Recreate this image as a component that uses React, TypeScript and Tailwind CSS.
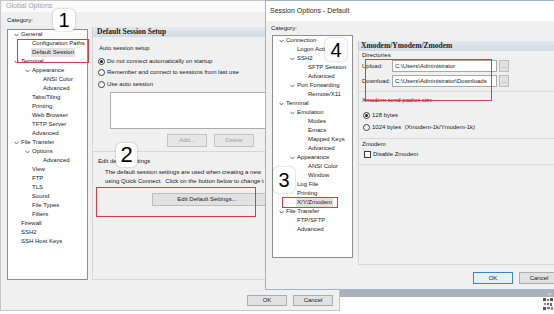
import React from 'react';

type Item = [number, string, boolean?, boolean?];

const TEXT_PL = ['pl-[13px]', 'pl-[24px]', 'pl-[35px]'];
const CHEV_PL = ['pl-[6px]', 'pl-[17px]', 'pl-[28px]'];

const treeA: Item[] = [
  [0, 'General', true],
  [1, 'Configuration Paths'],
  [1, 'Default Session', false, true],
  [0, 'Terminal', true],
  [1, 'Appearance', true],
  [2, 'ANSI Color'],
  [2, 'Advanced'],
  [1, 'Tabs/Tiling'],
  [1, 'Printing'],
  [1, 'Web Browser'],
  [1, 'TFTP Server'],
  [1, 'Advanced'],
  [0, 'File Transfer', true],
  [1, 'Options', true],
  [2, 'Advanced'],
  [1, 'View'],
  [1, 'FTP'],
  [1, 'TLS'],
  [1, 'Sound'],
  [1, 'File Types'],
  [1, 'Filters'],
  [0, 'Firewall'],
  [0, 'SSH2'],
  [0, 'SSH Host Keys'],
];

const treeB: Item[] = [
  [0, 'Connection', true],
  [1, 'Logon Actions'],
  [1, 'SSH2', true],
  [2, 'SFTP Session'],
  [2, 'Advanced'],
  [1, 'Port Forwarding', true],
  [2, 'Remote/X11'],
  [0, 'Terminal', true],
  [1, 'Emulation', true],
  [2, 'Modes'],
  [2, 'Emacs'],
  [2, 'Mapped Keys'],
  [2, 'Advanced'],
  [1, 'Appearance', true],
  [2, 'ANSI Color'],
  [2, 'Window'],
  [1, 'Log File'],
  [1, 'Printing'],
  [1, 'X/Y/Zmodem', false, true],
  [0, 'File Transfer', true],
  [1, 'FTP/SFTP'],
  [1, 'Advanced'],
];

const Chev = () => (
  <svg width="5" height="4" viewBox="0 0 5 4" className="shrink-0">
    <polyline points="0.5,0.8 2.5,3 4.5,0.8" fill="none" stroke="#5a5a5a" strokeWidth="0.9" />
  </svg>
);

function Tree({ items }: { items: Item[] }) {
  return (
    <div className="flex flex-col">
      {items.map(([lvl, label, chev, sel], i) => (
        <div
          key={i}
          className={`h-[9px] flex items-center whitespace-nowrap ${chev ? CHEV_PL[lvl] : TEXT_PL[lvl]}`}
        >
          {chev && <Chev />}
          <span
            className={`leading-[9px] ${chev ? 'ml-[2px]' : ''} ${sel ? 'bg-[#e2e2e2] px-[1px] -ml-[1px]' : ''}`}
          >
            {label}
          </span>
        </div>
      ))}
    </div>
  );
}

const Radio = ({ on }: { on?: boolean }) => (
  <span className="w-[7px] h-[7px] rounded-full border border-[#3a3a3a] bg-white flex items-center justify-center shrink-0">
    {on && <span className="w-[3px] h-[3px] rounded-full bg-[#1a1a1a]" />}
  </span>
);

const Btn = ({ children, cls }: { children: React.ReactNode; cls: string }) => (
  <div className={`flex items-center justify-center border bg-[#e1e1e1] ${cls}`}>{children}</div>
);

export default function App() {
  return (
    <div className="relative w-[554px] h-[314px] overflow-hidden bg-white text-[6px] text-[#1a1a1a] font-['Liberation_Sans',Arial,sans-serif]">
      {/* Window A: Global Options */}
      <div className="absolute left-0 top-0 w-[340px] h-[311px] bg-[#f0f0f0] border border-[#c6c6c6] flex flex-col">
        <div className="h-[11px] bg-[#fafafa] text-[7px] leading-[10px] pl-[5px] text-[#a3a3a3]">Global Options</div>
        <div className="flex h-[268px]">
          <div className="w-[87px] pl-[6px] flex flex-col">
            <div className="mt-[4px] h-[9px] leading-[9px]">Category:</div>
            <div className="mt-[4px] w-[81px] h-[253px] bg-white border border-[#8e8e8e]">
              <Tree items={treeA} />
            </div>
          </div>
          <div className="ml-[4px] mt-[15px] w-[241px] flex flex-col">
            <div className="h-[10px] bg-gradient-to-b from-[#e2e8ef] to-[#d2dbe6] border-l border-[#c5cfda] pl-[4px] font-['Liberation_Serif',serif] font-bold text-[7.5px] leading-[10px] text-[#1a1a1a] whitespace-nowrap">
              Default Session Setup
            </div>
            <div className="h-[243px] border-l border-r border-b border-[#d6d6d6] flex flex-col">
              <div className="mt-[7px] pl-[6px] h-[9px] leading-[9px]">Auto session setup</div>
              <div className="mt-[2.5px] flex flex-col">
                <div className="h-[11.5px] pl-[5px] flex items-center gap-[2px] whitespace-nowrap">
                  <Radio on />
                  <span>Do not connect automatically on startup</span>
                </div>
                <div className="h-[11.5px] pl-[5px] flex items-center gap-[2px] whitespace-nowrap">
                  <Radio />
                  <span>Remember and connect to sessions from last use</span>
                </div>
                <div className="h-[11.5px] pl-[5px] flex items-center gap-[2px] whitespace-nowrap">
                  <Radio />
                  <span>Use auto session</span>
                </div>
              </div>
              <div className="mt-[2px] ml-[17px] w-[200px] h-[37px] bg-white border border-[#adadad]" />
              <div className="mt-[5px] ml-[74px] flex gap-[7px]">
                <Btn cls="w-[40px] h-[13px] border-[#c4c4c4] bg-[#e6e6e6] text-[#a3a3a3]">Add...</Btn>
                <Btn cls="w-[40px] h-[13px] border-[#c4c4c4] bg-[#e6e6e6] text-[#a3a3a3]">Delete</Btn>
              </div>
              <div className="mt-[4px] border-t border-[#d6d6d6]" />
              <div className="mt-[4.5px] pl-[5px] h-[9px] leading-[9px]">Edit default settings</div>
              <div className="mt-[2px] pl-[12px] flex flex-col whitespace-nowrap">
                <div className="h-[9px] leading-[9px]">The default session settings are used when creating a new</div>
                <div className="h-[9px] leading-[9px]">using Quick Connect.&nbsp; Click on the button below to change t</div>
              </div>
              <Btn cls="mt-[7.5px] ml-[59px] w-[140px] h-[13px] border-[#bcbcbc] pr-[30px]">Edit Default Settings...</Btn>
            </div>
          </div>
        </div>
        <div className="mt-[15px] flex justify-end gap-[6px] pr-[6px]">
          <Btn cls="w-[40px] h-[11px] border-[#adadad]">OK</Btn>
          <Btn cls="w-[40px] h-[11px] border-[#adadad]">Cancel</Btn>
        </div>
      </div>

      {/* desktop strip */}
      <div className="absolute left-[340px] top-[290px] w-[214px] h-[7px] bg-[#a9b1ba] flex justify-end items-center pr-[3px]">
        <span className="text-[6px] leading-none text-[#e8e8e8]">×</span>
      </div>
      <svg className="absolute left-[543px] top-[298px]" width="10" height="12" viewBox="0 0 10 12">
        <rect width="10" height="12" fill="#f4f4f4" />
        <rect x="0" y="0" width="3" height="3" fill="#555" />
        <rect x="7" y="0" width="3" height="3" fill="#555" />
        <rect x="0" y="9" width="3" height="3" fill="#555" />
        <rect x="4" y="1" width="2" height="2" fill="#777" />
        <rect x="4" y="5" width="2" height="2" fill="#666" />
        <rect x="1" y="5" width="2" height="2" fill="#888" />
        <rect x="7" y="5" width="2" height="3" fill="#666" />
        <rect x="4" y="9" width="3" height="2" fill="#777" />
        <rect x="8" y="9" width="2" height="3" fill="#888" />
      </svg>

      {/* Window B: Session Options */}
      <div className="absolute left-[265px] top-0 w-[300px] h-[290px] bg-[#f0f0f0] border-l border-t border-b border-[#9fb3c9] flex flex-col">
        <div className="h-[20px] bg-white text-[7px] leading-[20px] pl-[4px] text-[#2a2a2a] whitespace-nowrap">
          Session Options - Default
        </div>
        <div className="flex h-[244px]">
          <div className="w-[87px] flex flex-col">
            <div className="mt-[3px] pl-[5px] h-[9px] leading-[9px]">Category:</div>
            <div className="mt-[2px] ml-[6px] w-[81px] h-[223px] bg-white border border-[#8e8e8e]">
              <Tree items={treeB} />
            </div>
          </div>
          <div className="ml-[5px] mt-[20px] w-[200px] flex flex-col">
            <div className="h-[10px] bg-gradient-to-b from-[#e2e8ef] to-[#d2dbe6] border-l border-[#c5cfda] pl-[2px] font-['Liberation_Serif',serif] font-bold text-[7.5px] leading-[10px] whitespace-nowrap">
              Xmodem/Ymodem/Zmodem
            </div>
            <div className="h-[214px] border-l border-b border-[#d6d6d6] flex flex-col">
              <div className="pl-[3px] h-[9px] leading-[9px]">Directories</div>
              <div className="h-[12px] pl-[3px] flex items-center whitespace-nowrap">
                <span className="w-[30px]">Upload:</span>
                <div className="w-[105px] h-[12px] bg-white border border-[#a8a8a8] pl-[2px] flex items-center">C:\Users\Administrator</div>
                <Btn cls="ml-[2px] w-[10px] h-[12px] border-[#bdbdbd] text-[#777]">...</Btn>
              </div>
              <div className="mt-[3px] h-[12px] pl-[3px] flex items-center whitespace-nowrap">
                <span className="w-[30px]">Download:</span>
                <div className="w-[105px] h-[12px] bg-white border border-[#a8a8a8] pl-[2px] flex items-center overflow-hidden">C:\Users\Administrator\Downloads</div>
                <Btn cls="ml-[2px] w-[10px] h-[12px] border-[#bdbdbd] text-[#777]">...</Btn>
              </div>
              <div className="mt-[4px] border-t border-[#dadada]" />
              <div className="mt-[3.5px] pl-[3px] h-[9px] leading-[9px]">Xmodem send packet size</div>
              <div className="mt-[5px] h-[12px] pl-[4px] flex items-center gap-[2px] whitespace-nowrap">
                <Radio on />
                <span>128 bytes</span>
              </div>
              <div className="h-[12px] pl-[4px] flex items-center gap-[2px] whitespace-nowrap">
                <Radio />
                <span>1024 bytes&nbsp; (Xmodem-1k/Ymodem-1k)</span>
              </div>
              <div className="mt-[4px] border-t border-[#dadada]" />
              <div className="mt-[1px] pl-[3px] h-[9px] leading-[9px]">Zmodem</div>
              <div className="h-[12px] pl-[5px] flex items-center gap-[2px] whitespace-nowrap">
                <span className="w-[7px] h-[7px] border border-[#3a3a3a] bg-white shrink-0" />
                <span>Disable Zmodem</span>
              </div>
              <div className="mt-[3px] border-t border-[#dadada]" />
            </div>
          </div>
        </div>
        <div className="mt-[7px] flex gap-[6px] pl-[207px]">
          <Btn cls="w-[40px] h-[12px] border-[#2f86d6] bg-[#e5f1fb]">OK</Btn>
          <Btn cls="w-[40px] h-[12px] border-[#adadad]">Cancel</Btn>
        </div>
      </div>

      {/* Red highlight boxes */}
      <div className="absolute left-[17px] top-[39px] w-[72px] h-[24px] border-[1.5px] border-[#e2363c]" />
      <div className="absolute left-[96px] top-[187px] w-[160px] h-[30px] border-[1.5px] border-[#e2363c]" />
      <div className="absolute left-[282px] top-[197px] w-[56px] h-[11px] border-[1.5px] border-[#e2363c]" />
      <div className="absolute left-[365px] top-[59px] w-[127px] h-[42px] border-[1.5px] border-[#e2363c]" />

      {/* Number badges */}
      <div className="absolute left-[53px] top-[9px] w-[22px] h-[22px] bg-white rounded-[5px] shadow-[0_0_2px_rgba(0,0,0,0.35)] flex items-center justify-center text-[20px] leading-none text-black">1</div>
      <div className="absolute left-[116px] top-[143px] w-[21px] h-[24px] bg-white rounded-[5px] shadow-[0_0_2px_rgba(0,0,0,0.35)] flex items-center justify-center text-[22px] leading-none text-black">2</div>
      <div className="absolute left-[273px] top-[167px] w-[22px] h-[26px] bg-white rounded-[5px] shadow-[0_0_2px_rgba(0,0,0,0.35)] flex items-center justify-center text-[20px] leading-none text-black">3</div>
      <div className="absolute left-[325px] top-[38px] w-[22px] h-[23px] bg-white rounded-[5px] shadow-[0_0_2px_rgba(0,0,0,0.35)] flex items-center justify-center text-[20px] leading-none text-black">4</div>
    </div>
  );
}
